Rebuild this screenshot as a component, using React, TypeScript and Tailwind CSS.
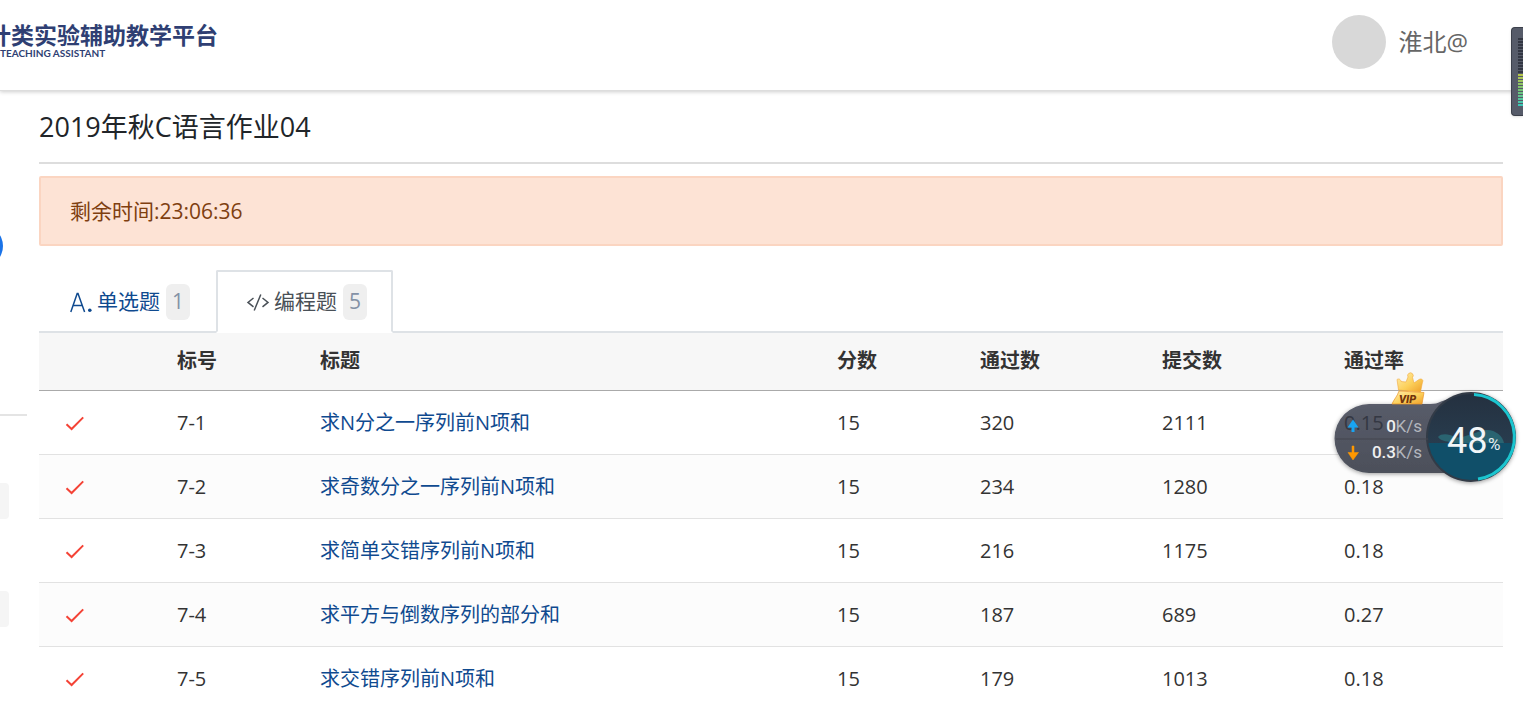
import { useState } from "react";

type Problem = {
  label: string;
  title: string;
  score: number;
  accepted: number;
  submitted: number;
  rate: string;
};

const problems: Problem[] = [
  { label: "7-1", title: "求N分之一序列前N项和", score: 15, accepted: 320, submitted: 2111, rate: "0.15" },
  { label: "7-2", title: "求奇数分之一序列前N项和", score: 15, accepted: 234, submitted: 1280, rate: "0.18" },
  { label: "7-3", title: "求简单交错序列前N项和", score: 15, accepted: 216, submitted: 1175, rate: "0.18" },
  { label: "7-4", title: "求平方与倒数序列的部分和", score: 15, accepted: 187, submitted: 689, rate: "0.27" },
  { label: "7-5", title: "求交错序列前N项和", score: 15, accepted: 179, submitted: 1013, rate: "0.18" },
];

const CheckIcon = () => (
  <svg width="20" height="20" viewBox="0 0 20 20" fill="none" stroke="#f44336" strokeWidth="2">
    <path d="M1.5 11.2 L6.6 16 L18.2 4.4" />
  </svg>
);

const ChoiceIcon = () => (
  <svg width="24" height="22" viewBox="0 0 24 22" fill="none" stroke="currentColor" strokeWidth="1.5">
    <path d="M1.8 21 L8.2 2.5 H9 L15.6 21 M4.2 14.5 H13.2" />
    <circle cx="20.8" cy="19.3" r="1.8" fill="currentColor" stroke="none" />
  </svg>
);

const CodeIcon = () => (
  <svg width="24" height="20" viewBox="0 0 24 20" fill="none" stroke="currentColor" strokeWidth="1.5">
    <path d="M7.5 6 L2 10.4 L7.5 14.8 M16.5 6 L22 10.4 L16.5 14.8 M14.8 2.5 L8.2 18.5" />
  </svg>
);

function Header() {
  return (
    <header className="relative flex h-[91px] items-center justify-between border-b border-[#dddddd] bg-white pr-[55px] shadow-[0_1px_4px_rgba(0,0,0,0.2)]">
      <a href="#" className="-ml-3 -mt-2 block text-[#2f3f73]">
        <span className="block text-[23px] leading-6 font-bold">计类实验辅助教学平台</span>
        <span className="block pl-3 font-[Lato,sans-serif] text-[10px] leading-3 font-bold">TEACHING ASSISTANT</span>
      </a>
      <a href="#" className="-mt-1.5 flex items-center gap-3 text-2xl text-[#666666]">
        <span className="size-[54px] rounded-full bg-[#d8d8d8]" />
        淮北@
      </a>
    </header>
  );
}

function Sidebar() {
  return (
    <aside className="flex w-[39px] shrink-0 flex-col overflow-hidden pt-[134px]">
      <span className="-ml-[39px] size-[42px] rounded-full bg-[#1a73e8]" />
      <hr className="mt-[147px] w-[27px] border-t-2 border-[#e4e4e4]" />
      <span className="mt-[67px] h-9 w-[9px] rounded-r bg-[#f5f5f5]" />
      <span className="mt-[72px] h-9 w-[9px] rounded-r bg-[#f5f5f5]" />
    </aside>
  );
}

function SpeedWidget() {
  return (
    <svg
      className="absolute top-[368px] right-0 font-[Roboto,sans-serif]"
      width="193"
      height="122"
      viewBox="1330 368 193 122"
    >
      <defs>
        <linearGradient id="pill" x1="0" y1="0" x2="0" y2="1">
          <stop offset="0" stopColor="#555967" />
          <stop offset="1" stopColor="#484c57" />
        </linearGradient>
        <linearGradient id="sky" x1="0" y1="0" x2="0" y2="1">
          <stop offset="0" stopColor="#24303f" />
          <stop offset="1" stopColor="#283c4e" />
        </linearGradient>
        <linearGradient id="gold" x1="0" y1="0" x2="1" y2="1">
          <stop offset="0" stopColor="#ffeeb0" />
          <stop offset="0.55" stopColor="#fcd05a" />
          <stop offset="1" stopColor="#ee9f2a" />
        </linearGradient>
        <clipPath id="ball">
          <circle cx="1471" cy="437" r="43" />
        </clipPath>
        <filter id="soft" x="-20%" y="-20%" width="140%" height="150%">
          <feDropShadow dx="0" dy="1" stdDeviation="2" floodOpacity="0.4" />
        </filter>
      </defs>
      <g filter="url(#soft)">
        <path
          d="M1369 404 H1430 C1440 404 1441 400 1447 400 V473 H1369 A34.5 34.5 0 0 1 1369 404 Z"
          fill="url(#pill)"
          fillOpacity="0.96"
        />
        <circle cx="1471" cy="437" r="45" fill="#333b46" />
      </g>
      <path d="M1336 439 H1430" stroke="#42454f" />
      <text x="1344" y="430" fontSize="20" fill="#343843" className="font-['Open_Sans',sans-serif]">0.15</text>
      <path d="M1353 419.5 L1358.5 427.5 H1354.5 V432 H1351.5 V427.5 H1347.5 Z" fill="#18a4f2" />
      <path d="M1353 460 L1348 452.5 H1352 V446 H1354 V452.5 H1358.5 Z" fill="#ff9800" stroke="#ff9800" strokeWidth="0.5" />
      <g fontSize="17" textAnchor="end">
        <text x="1396" y="432" fill="#f0f0f0" fontWeight="500">0</text>
        <text x="1422" y="432" fill="#b3b6bd">K/s</text>
        <text x="1396" y="458" fill="#f0f0f0" fontWeight="500">0.3</text>
        <text x="1422" y="458" fill="#b3b6bd">K/s</text>
      </g>
      <g clipPath="url(#ball)">
        <path d="M1426 392 H1516 V443 H1426 Z" fill="url(#sky)" />
        <path d="M1438 437 C1441 433 1450 434 1454 437 C1461 439 1474 433 1481 431 C1492 427 1503 435 1504 443 H1454 C1449 441 1441 442 1438 437 Z" fill="#2a6471" />
        <path d="M1426 443 H1516 V482 H1426 Z" fill="#104f69" />
      </g>
      <path d="M1474 394.5 A42.5 42.5 0 0 1 1478 479" fill="none" stroke="#1bc5cf" strokeWidth="3" />
      <text x="1447" y="453" fontSize="36" fill="#f2f6f8">48</text>
      <text x="1488" y="450" fontSize="17" fill="#e3edf0">%</text>
      <path
        d="M1397 379.5 C1399 378 1401 380 1401 381.5 L1406 382 L1408 377 A2.8 2.8 0 1 1 1412.5 377.5 L1414 383 L1419 379.5 C1421 378 1424 380 1422.5 382 L1420.5 392 L1398.5 390 Z"
        fill="url(#gold)"
        stroke="#f1a83a"
        strokeWidth="0.6"
      />
      <path d="M1399 391 L1424 392.5 L1422 404 L1392 404 C1394 399 1397 397 1399 391 Z" fill="url(#gold)" stroke="#e9952a" strokeWidth="0.7" />
      <text x="1399" y="403" fontSize="11" fontWeight="900" fontStyle="italic" fill="#71340d">VIP</text>
    </svg>
  );
}

function LevelMeter() {
  return (
    <div className="absolute top-[27px] right-0 flex h-[89px] w-3 flex-col justify-center rounded-l border border-r-0 border-[#3c404b] bg-[#565b69] pl-1.5 shadow">
      <div className="h-9 bg-[repeating-linear-gradient(#333743_0_2px,#565b69_2px_3px)]" />
      <div className="relative h-8 bg-linear-to-b from-[#b9c546] via-[#72c473] to-[#37c6b9]">
        <div className="absolute inset-0 bg-[repeating-linear-gradient(transparent_0_2px,#565b69_2px_3px)]" />
      </div>
    </div>
  );
}

export default function App() {
  const [tab, setTab] = useState("code");

  const tabs = [
    { id: "choice", name: "单选题", count: 1, icon: <ChoiceIcon /> },
    { id: "code", name: "编程题", count: 5, icon: <CodeIcon /> },
  ];

  return (
    <div className="relative h-screen overflow-hidden bg-white font-['Open_Sans','Noto_Sans_CJK_SC',sans-serif]">
      <Header />
      <div className="flex">
        <Sidebar />
        <main className="min-w-0 flex-1 pt-4 pr-5">
          <h1 className="border-b-2 border-[#dddddd] pb-[15px] text-[27px] leading-10 text-[#212529]">
            2019年秋C语言作业04
          </h1>

          {/* Time left */}
          <div className="mt-3 rounded-xs border-2 border-[#fbd5c1] bg-[#fde3d5] px-[29px] py-[17px] text-[21px] leading-8 text-[#7f3f10]">
            剩余时间:23:06:36
          </div>

          {/* Problem type tabs */}
          <nav className="mt-6 flex border-b-2 border-[#dee2e6]">
            {tabs.map((item) => (
              <button
                key={item.id}
                onClick={() => setTab(item.id)}
                className={`-mb-0.5 flex h-[63px] items-center rounded-t-xs border-2 pr-6 pl-7 text-[21px] ${
                  tab === item.id
                    ? "border-[#dee2e6] border-b-white bg-white text-[#495057]"
                    : "border-transparent text-[#0f4a8f]"
                }`}
              >
                {item.icon}
                <span className="ml-1">{item.name}</span>
                <span className="ml-1.5 flex h-9 w-6 items-center justify-center rounded-md bg-[#efefef] text-[#8492a6]">
                  {item.count}
                </span>
              </button>
            ))}
          </nav>

          {/* Problem list */}
          <table className="w-full table-fixed text-left text-xl text-[#333333]">
            <colgroup>
              <col className="w-28" />
              <col className="w-[143px]" />
              <col />
              <col className="w-[143px]" />
              <col className="w-[182px]" />
              <col className="w-[182px]" />
              <col className="w-[185px]" />
            </colgroup>
            <thead>
              <tr className="h-[57px] border-b border-[#aaaaaa] bg-[#f7f7f7]">
                <th className="px-[26px]" />
                <th className="px-[26px]">标号</th>
                <th className="px-[26px]">标题</th>
                <th className="px-[26px]">分数</th>
                <th className="px-[26px]">通过数</th>
                <th className="px-[26px]">提交数</th>
                <th className="px-[26px]">通过率</th>
              </tr>
            </thead>
            <tbody>
              {problems.map((p) => (
                <tr key={p.label} className="h-16 border-b border-[#e2e2e2] even:bg-[#fcfcfc]">
                  <td className="px-[26px] pt-0.5"><CheckIcon /></td>
                  <td className="px-[26px] pt-0.5">{p.label}</td>
                  <td className="px-[26px] pt-0.5">
                    <a href="#" className="text-[#0f4a8f]">{p.title}</a>
                  </td>
                  <td className="px-[26px] pt-0.5">{p.score}</td>
                  <td className="px-[26px] pt-0.5">{p.accepted}</td>
                  <td className="px-[26px] pt-0.5">{p.submitted}</td>
                  <td className="px-[26px] pt-0.5">{p.rate}</td>
                </tr>
              ))}
            </tbody>
          </table>
        </main>
      </div>
      <LevelMeter />
      <SpeedWidget />
    </div>
  );
}
